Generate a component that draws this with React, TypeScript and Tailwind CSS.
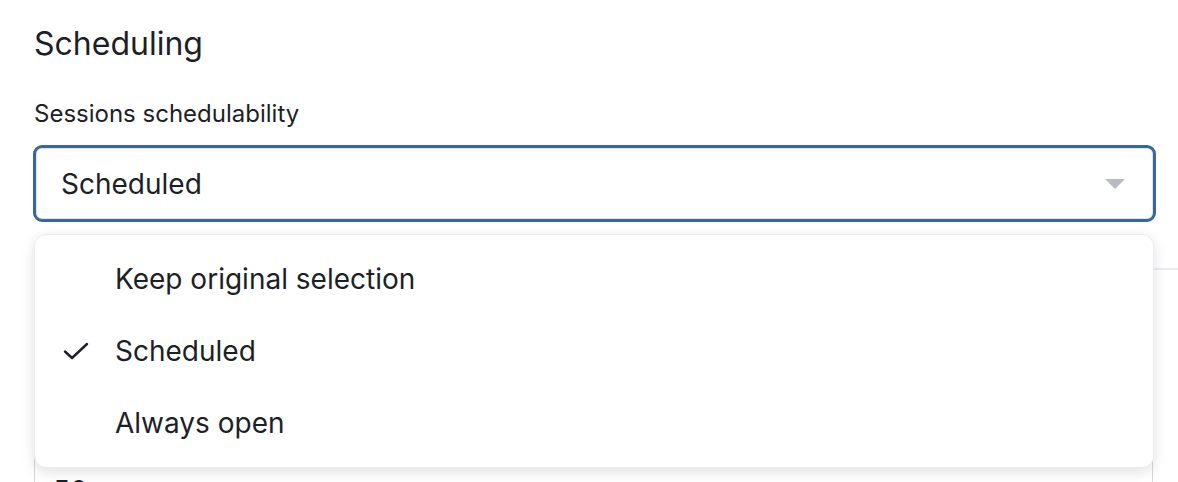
import { useState } from 'react';

const options = ['Keep original selection', 'Scheduled', 'Always open'];

function CheckIcon() {
  return (
    <svg width="26" height="18" viewBox="0 0 26 18" fill="none">
      <path d="M2 9.5 L9 16 L24 2" stroke="#1d1f27" strokeWidth="2.4" strokeLinecap="round" strokeLinejoin="round" />
    </svg>
  );
}

export default function App() {
  const [value] = useState('Scheduled');

  return (
    <div className="relative h-[482px] w-[1178px] overflow-hidden bg-white font-['Inter',sans-serif] text-[#1d1f27]">
      <div className="pl-[34px] pt-[24px]">
        <h2 className="text-[32px] leading-[40px] font-normal">Scheduling</h2>
        <div className="mt-[34px] text-[24px] leading-[32px]">Sessions schedulability</div>

        {/* select */}
        <div className="mt-[15px] -ml-[1px] flex h-[77px] w-[1123px] items-center justify-between rounded-[9px] border-[3px] border-[#36679f] pl-[25px] pr-[27px] shadow-[inset_0_0_0_1px_#e3e4e8]">
          <span className="text-[28px] leading-[36px]">{value}</span>
          <svg width="22" height="12" viewBox="0 0 22 12">
            <path d="M1 1 H21 L11 11 Z" fill="#b9bbc2" />
          </svg>
        </div>

        {/* content behind the open menu */}
        <div className="mt-[46px] h-[300px] border-t-[2px] border-[#ececf2]">
          <div className="mt-[168px] h-[60px] w-[1119px] rounded-[8px] border border-[#d6d7dd] pl-[18px] pt-[34px] text-[28px] leading-[36px]">
            50
          </div>
        </div>
      </div>

      {/* dropdown menu */}
      <div className="absolute left-[34px] top-[234px] w-[1120px] rounded-[12px] border border-[#ececf0] bg-white py-[8px] shadow-[0_4px_14px_rgba(0,0,0,0.12)]">
        {options.map((opt) => (
          <div key={opt} className="flex h-[72px] items-center">
            <div className="flex w-[80px] justify-end pr-[26px]">
              {opt === value && <CheckIcon />}
            </div>
            <span className="text-[28px] leading-[36px]">{opt}</span>
          </div>
        ))}
      </div>
    </div>
  );
}
